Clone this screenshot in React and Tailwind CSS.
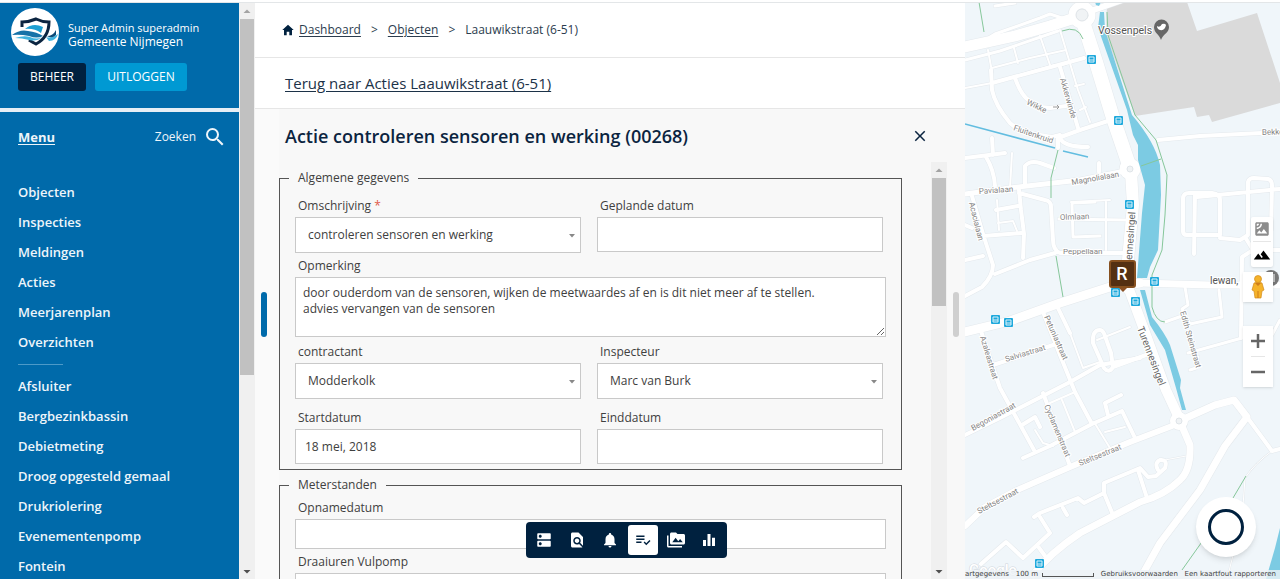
import {
    MdClose,
    MdDns,
    MdEqualizer,
    MdFindInPage,
    MdNotifications,
    MdPermMedia,
    MdPlaylistAddCheck,
    MdSatellite,
    MdSearch,
    MdTerrain,
} from 'react-icons/md';
import { IoMdHome } from 'react-icons/io';

const mainMenu = ['Objecten', 'Inspecties', 'Meldingen', 'Acties', 'Meerjarenplan', 'Overzichten'];

const objectMenu = [
    'Afsluiter',
    'Bergbezinkbassin',
    'Debietmeting',
    'Droog opgesteld gemaal',
    'Drukriolering',
    'Evenementenpomp',
    'Fontein',
];

const tools = [
    { label: 'Objectgegevens', Icon: MdDns },
    { label: 'Inspecties', Icon: MdFindInPage },
    { label: 'Meldingen', Icon: MdNotifications },
    { label: 'Acties', Icon: MdPlaylistAddCheck, active: true },
    { label: 'Media', Icon: MdPermMedia },
    { label: 'Grafieken', Icon: MdEqualizer },
];

// [width, path]
const roads = [
    [2, 'M965 88 L992 83 L1055 65 M988 50 L992 72 M1014 48 L1018 63 M1040 36 L1050 65 M1060 30 L1078 90 L1090 122 M992 68 L1030 58 L1066 50 M1062 65 L1072 62 M1075 86 L1084 84 M1080 110 L1086 107'],
    [3, 'M965 60 L1000 51 L1058 31 M990 37 L995 34 L1040 18 L1050 14 L1068 20 M995 6 L1015 3'],
    [4, 'M991 70 L992 90 Q995 105 1010 123 Q1020 133 1052 137 L1060 135 M992 83 L1084 58 M1015 78 Q1020 92 1026 98 Q1036 108 1050 108 L1066 106 M1060 67 L1067 90 L1078 128 M1058 138 L1080 130 L1108 121 M1060 137 Q1062 147 1088 147 M1058 138 L1058 148'],
    [4, 'M965 158 L1005 153 M992 138 L993 155 M986 157 Q994 170 995 186 M1025 186 L1025 166 Q1030 160 1040 163 L1054 168 M1099 163 L1099 172'],
    [5, 'M965 194 L1010 188 L1080 180 L1125 171'],
    [4, 'M1019 190 L1021 210 L1024 234 L1023 258 M1019 193 L1045 200 Q1051 201 1051 207 L1053 240 Q1053 250 1060 253 L1125 253 M972 196 L983 234 L993 265 Q993 276 982 287 L965 296 M965 260 L983 256 M965 225 L972 228 M983 236 L1021 233 M995 274 L1030 260 L1055 253 M996 210 L1018 206'],
    [2, 'M997 200 L999 230 M998 223 L1013 221 L1017 231 M1071 202 L1110 200 M1106 202 L1106 250 M1012 153 L1010 188'],
    [3, 'M1059 219 L1125 220 M1072 204 L1073 237 L1100 236 M1072 203 L1095 202'],
    [4, 'M1197 197 L1280 189 M1158 140 L1200 136 L1280 132 M1183 232 L1183 199 Q1183 193 1189 193 L1212 193 Q1220 194 1220 200 L1220 235 L1187 235 Q1183 235 1183 231 M1195 194 L1194 254 M1220 238 L1240 240 L1248 235 L1248 182 Q1249 178 1254 178 L1268 179 Q1272 180 1272 186 L1271 230 M1245 237 L1253 250 L1242 257 L1241 338 M1253 250 L1280 250'],
    [3, 'M1185 287 L1188 305 L1182 309 L1190 324 L1222 317 L1219 290 M1165 322 L1182 316 M1188 353 L1242 338 L1260 330 M1190 370 L1196 368 L1198 357 M1272 189 L1280 189 M1262 335 L1272 335 L1280 320'],
    [9, 'M965 332 L1010 321 L1060 303 L1110 287 L1140 283'],
    [7, 'M1140 283 L1210 285 L1280 285'],
    [4, 'M981 331 L1000 388 L1034 450 M1000 388 L990 360 M1043 312 L1060 355 L1075 392 L1092 424 M1057 306 L1070 333 M993 365 L1018 357 L1056 344 M965 435 L1000 418 L1070 382 L1100 365 L1140 358 M1043 393 L1055 425 L1070 466 M1023 458 L1050 446 L1092 424 L1122 411 L1135 438 M1108 415 L1105 403 L1121 395 M1022 425 L1035 417 L1040 427'],
    [2, 'M1070 333 L1083 368 L1100 362 M1094 422 L1110 448 M1105 432 L1125 427 M1050 403 L1075 392 M1062 400 L1075 432 M1035 430 L1043 443 L1053 446 M1097 340 L1130 327'],
    [4, 'M1100 330 Q1092 330 1093 343 L1104 368 Q1109 374 1113 367 L1111 353 L1105 336 Q1103 330 1100 330 M1113 367 L1146 355'],
    [6, 'M965 526 L985 507 L1015 491 L1070 467 L1130 442 L1172 426'],
    [7, 'M1181 424 L1190 445 Q1191 470 1180 480 Q1165 495 1140 502 L1080 533 Q1050 553 1033 575'],
    [7, 'M1186 418 L1215 405 L1234 400 L1247 417 L1225 446 L1200 490 L1160 543 L1140 579'],
    [4, 'M1247 417 L1272 451 L1280 449'],
    [4, 'M981 564 L1006 542 L1023 558 L1037 545 L1048 560 M1034 517 L1040 513 L1078 498 L1084 503 L1104 493 L1104 483 L1140 468 L1148 477 L1156 476 L1165 468 Q1168 459 1160 460 Q1154 463 1158 470 M1104 493 L1113 515 M1138 470 L1147 498 M1063 508 L1067 515 M1040 517 L1050 533 L1037 545'],
    [1, 'M1165 460 L1186 456 M1272 451 Q1255 463 1245 478 L1242 520 L1227 579'],
    [11, 'M965 47 L1015 36 L1050 26 L1078 17'],
    [6, 'M1088 12 L1122 0'],
    [14, 'M1084 25 L1096 62 L1113 118 L1128 162'],
    [12, 'M1131 172 L1133 205 L1128 260 L1128 288'],
    [10, 'M1130 292 L1146 335 L1166 390 L1179 418'],
];

const greenways = [
    'M979 2 L984 32',
    'M1062 31 Q1078 25 1083 39',
    'M1107 12 L1108 35 L1135 115 L1156 140 L1167 175 L1165 215 L1162 250 L1152 275 L1152 307 Q1156 322 1165 322',
    'M1141 166 L1161 159',
    'M1058 150 L1051 178 L1051 198',
    'M1056 256 L1063 297',
    'M1246 476 L1233 498 L1182 570',
];

const busStops = [
    [1091, 59],
    [1118, 120],
    [1129, 204],
    [1154, 281],
    [1115, 292],
    [1135, 301],
    [995, 319],
    [1008, 322],
    [1039, 563],
];

// [text, x, y, angle, size]
const streets = [
    ['Akkerwinde', 1060, 79, 74, 8],
    ['Wikke', 1026, 104, 26, 8],
    ['Fluitenkruid', 1013, 130, 19, 8],
    ['Magnolialaan', 1072, 185, -10, 8],
    ['Pavialaan', 979, 194, -4, 8],
    ['Acacialaan', 969, 203, 76, 8],
    ['Olmlaan', 1060, 220, -2, 8],
    ['Peppellaan', 1063, 254, 0, 8],
    ['Petuniastraat', 1044, 317, 66, 8],
    ['Azaleastraat', 980, 337, 73, 8],
    ['Salviastraat', 1006, 362, -17, 8],
    ['Edith Steinstraat', 1180, 312, 74, 8],
    ['Begoniastraat', 973, 431, -29, 8],
    ['Cyclamenstraat', 1044, 406, 67, 8],
    ['Steltsestraat', 1080, 466, -22, 8],
    ['Steltsestraat', 979, 514, -28, 8],
    ['Bekke', 1262, 135, -2, 8],
];

function Logo() {
    return (
        <svg viewBox="0 0 48 48" className="size-12 shrink-0" aria-hidden="true">
            <circle cx="24" cy="24" r="24" fill="#fff" />
            <path d="M11 19 V14 Q18 14 25 11 Q31 14 38 14 Q38 29 25 36 Q21 34 18 32" fill="none" stroke="#0b2440" strokeWidth="3" />
            <path d="M14 21 Q22 14 32 19 L30 25 Q23 20 14 21 Z" fill="#1c9fd2" />
            <path d="M1 27 Q9 21 17 23 Q26 24 32 28 Q26 31 18 28 Q9 26 1 27Z" fill="#1472a8" />
            <path d="M4 30 Q13 27 19 29 Q26 32 31 29 Q26 34 18 32 Q11 30 4 30Z" fill="#3fb3de" />
            <path d="M35 29 Q40 31 47 26 Q45 33 38 33 Z" fill="#3fb3de" />
            <path d="M36 28 Q42 28 45 22 L45 27 Q41 31 36 28Z" fill="#0b4a78" />
        </svg>
    );
}

function Scrollbar({ thumb }) {
    return (
        <div className="flex w-4 shrink-0 flex-col items-center justify-between bg-[#f0f0f0]" aria-hidden="true">
            <div className="flex w-full flex-col items-center">
                <svg viewBox="0 0 16 16" className="size-4">
                    <path d="M4.500 10 L8 6.500 L11.500 10Z" fill="#a3a3a3" />
                </svg>
                <div className={`w-3.5 bg-[#c1c1c1] ${thumb}`} />
            </div>
            <svg viewBox="0 0 16 16" className="size-4">
                <path d="M4.500 7 L8 10.500 L11.500 7Z" fill="#505050" />
            </svg>
        </div>
    );
}

function MenuList({ items }) {
    return (
        <ul>
            {items.map((item) => (
                <li key={item} className="h-[30px] leading-[30px]">
                    <a href="#">{item}</a>
                </li>
            ))}
        </ul>
    );
}

function Sidebar() {
    return (
        <aside className="flex w-[255px] shrink-0 text-white">
            <div className="flex min-w-0 flex-1 flex-col gap-1 overflow-hidden bg-[#e6eef5]">
                <div className="h-[105px] shrink-0 bg-[#006aaa] pt-[5px]">
                    <div className="flex items-center gap-[9px] pl-[11px]">
                        <Logo />
                        <div className="pt-1.5">
                            <p className="text-[11px] leading-[14px]">Super Admin superadmin</p>
                            <p className="text-xs leading-[14px] font-medium">Gemeente Nijmegen</p>
                        </div>
                    </div>
                    <div className="flex gap-[9px] pt-[7px] pl-[18px] text-xs leading-7 font-medium">
                        <button className="h-7 w-[68px] rounded-[3px] bg-[#00213f]">BEHEER</button>
                        <button className="h-7 w-[92px] rounded-[3px] bg-[#0099d3]">UITLOGGEN</button>
                    </div>
                </div>
                <nav className="flex-1 bg-[#006aaa] px-[18px] text-[13px] font-semibold text-[#eef5fa]">
                    <div className="flex h-[65px] items-start justify-between pt-3">
                        <a href="#" className="leading-[26px] font-bold underline underline-offset-2">
                            Menu
                        </a>
                        <button className="-mr-1.5 flex items-center gap-[7px] text-xs leading-[26px] font-medium">
                            Zoeken
                            <MdSearch className="size-6" />
                        </button>
                    </div>
                    <MenuList items={mainMenu} />
                    <hr className="mt-[7px] mb-1.5 w-[45px] border-[#4d9ac8]" />
                    <MenuList items={objectMenu} />
                </nav>
            </div>
            <Scrollbar thumb="h-[356px]" />
        </aside>
    );
}

function Label({ htmlFor, children }) {
    return (
        <label htmlFor={htmlFor} className="block h-6 pl-[3px] leading-[25px]">
            {children}
        </label>
    );
}

function TextField({ id, label, value = '', size = 'h-[35px]' }) {
    return (
        <div>
            <Label htmlFor={id}>{label}</Label>
            <input id={id} defaultValue={value} className={`block w-full border border-[#c9c9c9] bg-white px-[9px] ${size}`} />
        </div>
    );
}

function SelectField({ id, label, value, required }) {
    return (
        <div>
            <Label htmlFor={id}>
                {label} {required && <span className="text-[#e05a4a]">*</span>}
            </Label>
            <div className="relative">
                <select id={id} className="block h-9 w-full appearance-none border border-[#c9c9c9] bg-white px-3">
                    <option>{value}</option>
                </select>
                <svg viewBox="0 0 6 4" className="pointer-events-none absolute top-[17px] right-1.5 h-1 w-1.5" aria-hidden="true">
                    <path d="M0 0 H6 L3 3.500Z" fill="#888" />
                </svg>
            </div>
        </div>
    );
}

function ActionForm() {
    return (
        <form className="min-w-0 flex-1 overflow-hidden pt-[6px] pr-[29px] text-xs text-[#404040]">
            <fieldset className="border border-[#555] pb-[5px] pl-[15px]">
                <legend className="-ml-[6px] px-[9px] leading-5">Algemene gegevens</legend>
                <div className="grid grid-cols-2 gap-x-4 pt-[5px] pr-[18px]">
                    <SelectField id="omschrijving" label="Omschrijving" value="controleren sensoren en werking" required />
                    <TextField id="gepland" label="Geplande datum" />
                </div>
                <div className="pr-[15px]">
                    <Label htmlFor="opmerking">Opmerking</Label>
                    <textarea
                        id="opmerking"
                        className="block h-[60px] w-full border border-[#c9c9c9] bg-white px-[7px] py-[7px] leading-4"
                        defaultValue={
                            'door ouderdom van de sensoren, wijken de meetwaardes af en is dit niet meer af te stellen.\nadvies vervangen van de sensoren'
                        }
                    />
                </div>
                <div className="grid grid-cols-2 gap-x-4 gap-y-1.5 pt-0.5 pr-[18px]">
                    <SelectField id="contractant" label="contractant" value="Modderkolk" />
                    <SelectField id="inspecteur" label="Inspecteur" value="Marc van Burk" />
                    <TextField id="start" label="Startdatum" value="18 mei, 2018" />
                    <TextField id="eind" label="Einddatum" />
                </div>
            </fieldset>
            <fieldset className="mt-[5px] border border-[#555] pr-[15px] pb-[5px] pl-[15px]">
                <legend className="-ml-[6px] px-[9px] leading-5">Meterstanden</legend>
                <TextField id="opname" label="Opnamedatum" size="h-[30px]" />
                <TextField id="vulpomp" label="Draaiuren Vulpomp" size="h-[30px]" />
            </fieldset>
        </form>
    );
}

function Toolbar() {
    return (
        <div className="absolute bottom-[21px] left-[271px] flex gap-[3px] rounded-[4px] bg-[#00213f] p-[3px]">
            {tools.map(({ label, Icon, active }) => (
                <button
                    key={label}
                    aria-label={label}
                    className={`flex size-[30px] items-center justify-center rounded-[3px] ${
                        active ? 'bg-white text-[#00213f]' : 'text-white'
                    }`}
                >
                    <Icon className="size-[18px]" />
                </button>
            ))}
        </div>
    );
}

function MapPanel() {
    return (
        <section className="relative w-[315px] shrink-0 overflow-hidden bg-[#f0f6fa]">
            <svg viewBox="965 3 315 576" className="h-full w-full" preserveAspectRatio="xMinYMin slice" fontFamily="Roboto, sans-serif">
                <path d="M1107 2 H1187 L1197 31 L1257 13 L1280 83 V103 L1212 122 L1209 115 L1197 117 L1194 107 L1135 116 L1106 35Z" fill="#dadada" />
                <g fill="none" stroke="#e4e9ed" strokeLinejoin="round" strokeLinecap="round">
                    {roads.map(([width, d]) => (
                        <path key={d} d={d} strokeWidth={width + 1} />
                    ))}
                    <circle cx="1082" cy="15" r="10" strokeWidth="8" />
                    <circle cx="1130" cy="169" r="7" strokeWidth="8" />
                    <circle cx="1179" cy="421" r="6" strokeWidth="7" />
                </g>
                <g fill="none" stroke="#fff" strokeLinejoin="round" strokeLinecap="round">
                    {roads.map(([width, d]) => (
                        <path key={d} d={d} strokeWidth={width} />
                    ))}
                    <circle cx="1082" cy="15" r="10" strokeWidth="7" />
                    <circle cx="1130" cy="169" r="7" strokeWidth="7" />
                    <circle cx="1179" cy="421" r="6" strokeWidth="6" />
                </g>
                <circle cx="1082" cy="15" r="6" fill="#f0f3f5" stroke="#dfe4e8" />
                <circle cx="1130" cy="169" r="3" fill="#f0f3f5" stroke="#dfe4e8" />
                <circle cx="1179" cy="421" r="3" fill="#f0f3f5" stroke="#dfe4e8" />
                <g fill="#7ccbe3">
                    <path d="M1095 2 H1101 L1099 6 L1096 5Z" />
                    <path d="M1100 12 L1104 12 L1105 30 L1132 115 Q1155 142 1160 165 L1161 195 L1158 250 L1150 267 L1147 278 H1137 L1142 213 L1145 185 L1138 160 L1138 145 L1133 135 L1127 110 L1098 28Z" />
                    <path d="M1140 290 H1145 L1152 317 Q1165 333 1170 345 L1181 380 L1180 388 L1186 410 H1182 L1176 388 L1165 350 L1150 325Z" />
                    <path d="M1280 528 L1275 548 L1266 579 H1280Z" />
                </g>
                <path d="M965 124 L1055 148 M1063 151 L1088 157" stroke="#62bde0" strokeWidth="1.500" />
                <g fill="none" stroke="#86c79a" strokeWidth="1">
                    {greenways.map((d) => (
                        <path key={d} d={d} />
                    ))}
                </g>
                <g fill="#858585" stroke="#fff" strokeWidth="2" paintOrder="stroke">
                    {streets.map(([name, x, y, angle, size]) => (
                        <text key={name + x} x={x} y={y} fontSize={size} transform={`rotate(${angle} ${x} ${y})`}>
                            {name}
                        </text>
                    ))}
                    <text x="1132" y="260" fontSize="10" transform="rotate(-86 1132 260)" fill="#666">
                        ennesingel
                    </text>
                    <text x="1137" y="328" fontSize="10" transform="rotate(69 1137 328)" fill="#666">
                        Turennesingel
                    </text>
                    <text x="1098" y="34" fontSize="10.500" fill="#555">
                        Vossenpels
                    </text>
                    <text x="1210" y="284" fontSize="10" fill="#555">
                        lewan,
                    </text>
                </g>
                <path d="M1053 107 H1059 M1057 105 L1059 107 L1057 109" fill="none" stroke="#999" />
                <path d="M1161 40 C1159 34 1154 33 1154 27 A7.500 7.500 0 0 1 1169 27 C1169 33 1163 34 1161 40Z" fill="#666" />
                <path d="M1157 26 Q1160 28 1162 24 Q1165 23 1166 25 Q1165 31 1160 30 Q1157 29 1157 26Z" fill="#fff" />
                <circle cx="1271" cy="278" r="8" fill="#777" />
                <path d="M1274 274 V282 M1271 275 V278" stroke="#fff" />
                {busStops.map(([x, y]) => (
                    <g key={`${x}-${y}`}>
                        <rect x={x - 4} y={y - 4} width="9" height="9" rx="1" fill="#1fa9dc" />
                        <path d={`M${x - 2} ${y - 2} h5 v5 h-5z M${x - 2} ${y + 1} h5`} fill="none" stroke="#d9f1fa" strokeWidth="1" />
                    </g>
                ))}
                <path d="M1117 286 H1129 L1123 292Z" fill="#8a5024" />
                <rect x="1110" y="261" width="25" height="26" rx="2" fill="#543012" stroke="#86501f" strokeWidth="2" />
                <text x="1122" y="280" fontSize="18" fontWeight="500" textAnchor="middle" fill="#fff">
                    R
                </text>
                <text x="969" y="575" fontSize="15" fontWeight="500" fill="#fff" stroke="#cfd5da" strokeWidth="1" paintOrder="stroke">
                    Google
                </text>
            </svg>

            <div className="absolute top-[214px] right-[7px] flex w-[22px] flex-col items-center divide-y divide-[#e6e6e6] rounded-[2px] bg-white shadow">
                <button aria-label="Satelliet" className="flex h-[25px] items-center">
                    <MdSatellite className="size-[18px] text-[#8c8c8c]" />
                </button>
                <button aria-label="Terrein" className="flex h-[25px] items-center">
                    <MdTerrain className="size-[18px] text-black" />
                </button>
            </div>
            <button aria-label="Street View" className="absolute top-[269px] right-[7px] flex h-[30px] w-[30px] items-center justify-center bg-white shadow">
                <svg viewBox="0 0 16 24" className="h-6 w-4" aria-hidden="true">
                    <path d="M4 8 Q8 6 12 8 L14 15 L12 16 L11 23 H5 L4 16 L2 15Z" fill="#f5b32b" stroke="#d18b1c" strokeWidth=".7" />
                    <circle cx="8" cy="4" r="3.500" fill="#f5b32b" stroke="#d18b1c" strokeWidth=".7" />
                    <path d="M5 8 L8 11 L11 8Z M7.500 16 H8.500 V23 H7.500Z" fill="#d07d1a" />
                </svg>
            </button>
            <div className="absolute top-[323px] right-[7px] flex w-[30px] flex-col items-center divide-y divide-[#e6e6e6] bg-white shadow">
                <button aria-label="Inzoomen" className="flex h-[31px] items-center">
                    <svg viewBox="0 0 14 14" className="size-3.5" aria-hidden="true">
                        <path d="M7 0 V14 M0 7 H14" stroke="#666" strokeWidth="2.500" />
                    </svg>
                </button>
                <button aria-label="Uitzoomen" className="flex h-[30px] items-center">
                    <svg viewBox="0 0 14 14" className="size-3.5" aria-hidden="true">
                        <path d="M0 7 H14" stroke="#666" strokeWidth="2.500" />
                    </svg>
                </button>
            </div>
            <button aria-label="Menu openen" className="absolute right-6 bottom-[22px] flex size-[60px] items-center justify-center rounded-full bg-white shadow-md">
                <span className="size-9 rounded-full border-3 border-[#00213f]" />
            </button>
            <div className="absolute inset-x-0 bottom-0 flex h-[9px] items-center justify-between overflow-hidden bg-[#eef3f6]/80 pr-1 font-['DejaVu_Sans'] text-[7px] leading-[9px] whitespace-nowrap text-[#444]">
                <span>artgegevens</span>
                <span className="flex items-center gap-1">
                    100 m
                    <span className="h-1 w-[52px] border-x border-b border-[#555]" />
                </span>
                <a href="#">Gebruiksvoorwaarden</a>
                <a href="#">Een kaartfout rapporteren</a>
            </div>
        </section>
    );
}

export default function App() {
    return (
        <div className="flex h-screen flex-col overflow-hidden bg-white pt-[2px] font-['Open_Sans',sans-serif]">
            <div className="flex min-h-0 flex-1 border-t border-[#e3e6e8]">
                <Sidebar />
                <main className="relative flex min-w-0 flex-1 flex-col text-[#0b2440]">
                    <nav className="flex h-[55px] shrink-0 items-center gap-2.5 border-b border-[#e6e6e6] pl-[26px] text-xs text-[#2b3c4e]">
                        <span className="flex items-center gap-1">
                            <IoMdHome className="size-3.5 text-[#00213f]" />
                            <a href="#" className="underline underline-offset-2">
                                Dashboard
                            </a>
                        </span>
                        <span>&gt;</span>
                        <a href="#" className="underline underline-offset-2">
                            Objecten
                        </a>
                        <span>&gt;</span>
                        <span>Laauwikstraat (6-51)</span>
                    </nav>
                    <div className="flex h-[51px] shrink-0 items-center border-b border-[#e6e6e6] pl-[30px]">
                        <a href="#" className="text-[15px] leading-6 text-[#1c3248] underline underline-offset-2">
                            Terug naar Acties Laauwikstraat (6-51)
                        </a>
                    </div>
                    <div className="flex min-h-0 flex-1 bg-[#f8f8f8]">
                        <div className="flex w-6 shrink-0 items-center bg-[#fafafa] pl-1.5">
                            <div className="mb-[60px] h-[45px] w-1.5 rounded-full bg-[#006aaa]" />
                        </div>
                        <div className="flex min-w-0 flex-1 flex-col">
                            <header className="flex h-[53px] shrink-0 items-center justify-between pr-[18px] pl-1.5">
                                <h1 className="text-lg font-semibold">Actie controleren sensoren en werking (00268)</h1>
                                <button aria-label="Sluiten">
                                    <MdClose className="size-[18px]" />
                                </button>
                            </header>
                            <div className="flex min-h-0 flex-1">
                                <ActionForm />
                                <Scrollbar thumb="h-32" />
                            </div>
                        </div>
                        <div className="flex w-[18px] shrink-0 items-center pl-1.5">
                            <div className="mb-[60px] h-[45px] w-1.5 rounded-full bg-[#cfcfcf]" />
                        </div>
                    </div>
                    <Toolbar />
                </main>
                <MapPanel />
            </div>
        </div>
    );
}
